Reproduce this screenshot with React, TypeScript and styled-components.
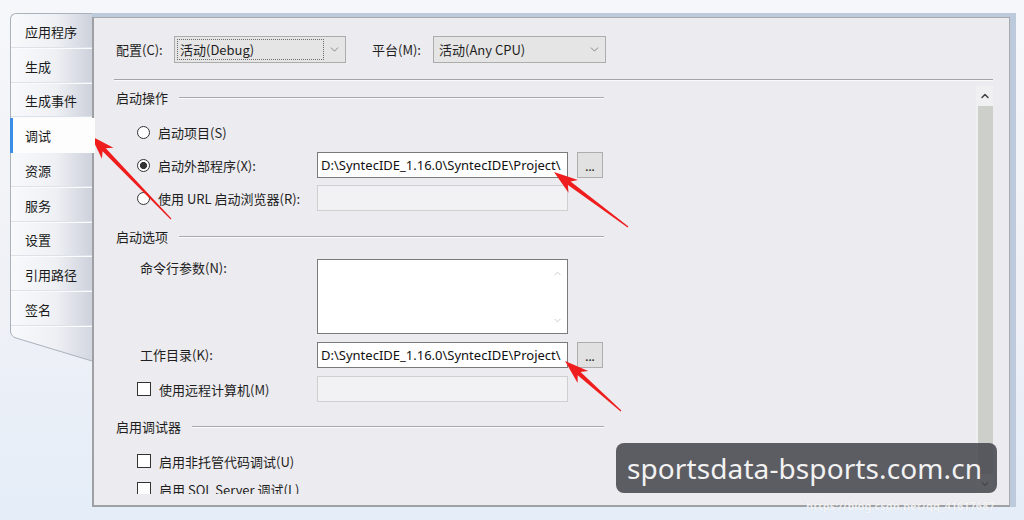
import React from "react";
import styled, { createGlobalStyle } from "styled-components";
import { ChevronDown, ChevronUp } from "lucide-react";

const CJK = `"Noto Sans CJK SC", "Noto Sans", sans-serif`;
const LATIN = `"Noto Sans", "Noto Sans CJK SC", sans-serif`;

const GlobalStyle = createGlobalStyle`
  html, body { margin: 0; padding: 0; }
  body { font-family: ${CJK}; font-size: 13px; color: #1e1e1e; }
  * { box-sizing: border-box; }
`;

const Page = styled.div`
  position: relative;
  width: 1024px;
  height: 520px;
  overflow: hidden;
  display: flex;
  padding: 13px 8px 13px 10px;
  background: linear-gradient(180deg, #f5f7fa 0%, #f0f1f6 55%, #e4edf8 100%);
`;

/* ---------- side tabs ---------- */

const TabColumn = styled.div`
  width: 82px;
  flex-shrink: 0;
  align-self: flex-start;
  display: flex;
  flex-direction: column;
  position: relative;
  z-index: 1;
`;

const Tab = styled.div<{ $active?: boolean }>`
  height: 34.75px;
  display: flex;
  align-items: center;
  font-size: 13px;
  color: #1b1b1b;
  border-left: ${(p) => (p.$active ? "3px solid #3a8ee6" : "1px solid #aab2be")};
  padding-left: ${(p) => (p.$active ? 12 : 14)}px;
  margin-right: ${(p) => (p.$active ? "-3px" : "0")};
  background: ${(p) =>
    p.$active
      ? "#fdfdfe"
      : "linear-gradient(90deg, #f8f9fb 0%, #eef0f4 55%, #cdd1db 100%)"};
  box-shadow: ${(p) =>
    p.$active ? "none" : "inset 0 -1px 0 #fafbfd, inset 0 -2px 0 #dde1e8"};
  &:first-child {
    border-top: 1px solid #aab2be;
    border-top-left-radius: 6px;
    height: 35.75px;
  }
`;

const TabFoot = () => (
  <svg width="82" height="36" viewBox="0 0 82 36">
    <defs>
      <linearGradient id="footFill" x1="0" x2="1" y1="0" y2="0">
        <stop offset="0" stopColor="#f8f9fb" />
        <stop offset="0.55" stopColor="#eef0f4" />
        <stop offset="1" stopColor="#d3d7e0" />
      </linearGradient>
    </defs>
    <path d="M0.5 0 L0.5 4 Q0.5 9 6 11 L82 34 L82 0 Z" fill="url(#footFill)" />
    <path d="M0.5 0 L0.5 4 Q0.5 9 6 11 L82 34" fill="none" stroke="#a9b0bc" />
  </svg>
);

/* ---------- property panel ---------- */

const Frame = styled.div`
  flex: 1;
  display: flex;
  border-top: 4px solid #bccadb;
  border-right: 6px solid #bccadb;
`;

const PanelBody = styled.div`
  flex: 1;
  display: flex;
  flex-direction: column;
  min-height: 0;
  background: #ecebef;
  border: 1px solid #a7a9ad;
  border-left: 2px solid #9ea0a4;
  border-bottom: 2px solid #9ea0a4;
  padding: 18px 16px 11px 20px;
`;

const TopBar = styled.div`
  display: flex;
  align-items: center;
  height: 27px;
`;

const BarLabel = styled.span<{ $w: number; $ml?: number }>`
  width: ${(p) => p.$w}px;
  margin-left: ${(p) => p.$ml ?? 0}px;
  padding-left: 2px;
  flex-shrink: 0;
`;

const Combo = styled.div<{ $w: number }>`
  width: ${(p) => p.$w}px;
  height: 27px;
  display: flex;
  align-items: center;
  background: #e5e5e5;
  border: 1px solid #acacac;
  padding: 2px 4px 2px 2px;
  color: #6a6a6a;
`;

const ComboText = styled.span<{ $focused?: boolean }>`
  flex: 1;
  height: 100%;
  display: flex;
  align-items: center;
  padding-left: 2px;
  margin-right: 4px;
  color: #1e1e1e;
  border: 1px dotted ${(p) => (p.$focused ? "#6d6d6d" : "transparent")};
`;

const Rule = styled.div`
  margin-top: 16px;
  height: 2px;
  border-top: 1px solid #a5a5a8;
  border-bottom: 1px solid #fafafa;
`;

const ScrollArea = styled.div`
  margin-top: 5px;
  flex: 1;
  min-height: 0;
  display: flex;
  overflow: hidden;
`;

const Form = styled.div`
  width: 490px;
  flex-shrink: 0;
  display: flex;
  flex-direction: column;
`;

const SectionHead = styled.div<{ $mt: number }>`
  margin-top: ${(p) => p.$mt}px;
  height: 22px;
  flex-shrink: 0;
  display: flex;
  align-items: center;
  padding-left: 2px;
  &::after {
    content: "";
    flex: 1;
    height: 1px;
    margin-left: 11px;
    background: #a9a9ad;
    box-shadow: 0 1px 0 #fbfbfb;
  }
`;

const FieldRow = styled.div<{ $mt: number; $h: number }>`
  margin-top: ${(p) => p.$mt}px;
  height: ${(p) => p.$h}px;
  flex-shrink: 0;
  display: grid;
  grid-template-columns: 171px 251px 26px;
  column-gap: 9px;
  align-items: center;
  padding-left: 23px;
`;

const Option = styled.span`
  display: flex;
  align-items: center;
  gap: 8px;
  white-space: nowrap;
`;

const Radio = styled.span<{ $checked?: boolean }>`
  width: 13px;
  height: 13px;
  border-radius: 50%;
  border: 1px solid #333;
  background: ${(p) =>
    p.$checked ? "radial-gradient(circle, #333 0 3.3px, #fff 3.8px)" : "#fff"};
`;

const Check = styled.span`
  width: 14px;
  height: 14px;
  border: 1px solid #333;
  background: #fff;
`;

const Caption = styled.span<{ $top?: boolean }>`
  padding-left: 3px;
  white-space: nowrap;
  align-self: ${(p) => (p.$top ? "start" : "center")};
  line-height: 18px;
`;

const TextBox = styled.div<{ $disabled?: boolean }>`
  height: 26px;
  display: flex;
  align-items: center;
  padding: 0 3px;
  overflow: hidden;
  white-space: nowrap;
  font-family: ${LATIN};
  font-size: 13px;
  color: #111;
  background: ${(p) => (p.$disabled ? "#f2f2f4" : "#fff")};
  border: 1px solid ${(p) => (p.$disabled ? "#cfcfd2" : "#7a7a7a")};
`;

const MultiLine = styled.div`
  height: 75px;
  display: flex;
  justify-content: flex-end;
  background: #fff;
  border: 1px solid #7a7a7a;
`;

const ScrollHints = styled.div`
  display: flex;
  flex-direction: column;
  justify-content: space-between;
  padding: 8px 4px 7px 0;
  color: #a9a9a9;
`;

const Browse = styled.div`
  width: 26px;
  height: 26px;
  display: flex;
  align-items: center;
  justify-content: center;
  padding-top: 3px;
  font-family: ${LATIN};
  font-size: 11px;
  font-weight: 700;
  color: #333;
  background: #e1e1e1;
  border: 1px solid #adadad;
`;

const VScroll = styled.div`
  margin-left: auto;
  width: 17px;
  display: flex;
  flex-direction: column;
  background: #f0f0f2;
`;

const ScrollBtn = styled.div`
  height: 20px;
  display: flex;
  align-items: center;
  justify-content: center;
  color: #404040;
`;

const Thumb = styled.div`
  flex: 1;
  margin-left: 2px;
  background: #cdcfca;
`;

/* ---------- overlays ---------- */

const Marks = styled.svg`
  position: absolute;
  left: 0;
  top: 0;
  pointer-events: none;
`;

const Stamp = styled.div`
  position: absolute;
  left: 616px;
  top: 443px;
  width: 381px;
  height: 50px;
  display: flex;
  align-items: center;
  padding: 0 0 1px 11px;
  border-radius: 8px;
  background: rgba(72, 72, 80, 0.88);
  color: #f2f2f2;
  font-family: ${LATIN};
  font-size: 28px;
  letter-spacing: 0.1px;
`;

const BlogMark = styled.div`
  position: absolute;
  left: 806px;
  top: 498px;
  font-family: ${LATIN};
  font-size: 11px;
  font-weight: 700;
  white-space: nowrap;
  color: rgba(255, 255, 255, 0.8);
  text-shadow: 0 0 1px rgba(0, 0, 0, 0.12);
`;

type Pt = [number, number];

function arrowShape(tail: Pt, tip: Pt) {
  const dx = tip[0] - tail[0];
  const dy = tip[1] - tail[1];
  const len = Math.hypot(dx, dy);
  const ux = dx / len;
  const uy = dy / len;
  const nx = -uy;
  const ny = ux;
  const at = (d: number, w: number): string =>
    `${(tip[0] - ux * d + nx * w).toFixed(1)},${(tip[1] - uy * d + ny * w).toFixed(1)}`;
  return [
    at(len, 0.6),
    at(19, 2.2),
    at(24, 8),
    at(0, 0),
    at(24, -8),
    at(19, -2.2),
    at(len, -0.6),
  ].join(" ");
}

const arrows: [Pt, Pt][] = [
  [[171, 219], [91, 136]],
  [[628, 227], [554, 172]],
  [[621, 411], [565, 361]],
];

const tabs = ["应用程序", "生成", "生成事件", "调试", "资源", "服务", "设置", "引用路径", "签名"];

const projectPath = "D:\\SyntecIDE_1.16.0\\SyntecIDE\\Project\\";

export default function App() {
  return (
    <>
      <GlobalStyle />
      <Page>
        <TabColumn>
          {tabs.map((t) => (
            <Tab key={t} $active={t === "调试"}>
              {t}
            </Tab>
          ))}
          <TabFoot />
        </TabColumn>

        <Frame>
          <PanelBody>
            <TopBar>
              <BarLabel $w={60}>配置(C):</BarLabel>
              <Combo $w={172}>
                <ComboText $focused>活动(Debug)</ComboText>
                <ChevronDown size={13} strokeWidth={1.4} />
              </Combo>
              <BarLabel $w={63} $ml={24}>
                平台(M):
              </BarLabel>
              <Combo $w={173}>
                <ComboText>活动(Any CPU)</ComboText>
                <ChevronDown size={13} strokeWidth={1.4} />
              </Combo>
            </TopBar>
            <Rule />

            <ScrollArea>
              <Form>
                <SectionHead $mt={0}>启动操作</SectionHead>
                <FieldRow $mt={11} $h={26}>
                  <Option>
                    <Radio />
                    启动项目(S)
                  </Option>
                </FieldRow>
                <FieldRow $mt={7} $h={26}>
                  <Option>
                    <Radio $checked />
                    启动外部程序(X):
                  </Option>
                  <TextBox>{projectPath}</TextBox>
                  <Browse>...</Browse>
                </FieldRow>
                <FieldRow $mt={7} $h={26}>
                  <Option>
                    <Radio />
                    使用 URL 启动浏览器(R):
                  </Option>
                  <TextBox $disabled />
                </FieldRow>

                <SectionHead $mt={14}>启动选项</SectionHead>
                <FieldRow $mt={12} $h={75}>
                  <Caption $top>命令行参数(N):</Caption>
                  <MultiLine>
                    <ScrollHints>
                      <ChevronUp size={11} strokeWidth={1.3} />
                      <ChevronDown size={11} strokeWidth={1.3} />
                    </ScrollHints>
                  </MultiLine>
                </FieldRow>
                <FieldRow $mt={8} $h={26}>
                  <Caption>工作目录(K):</Caption>
                  <TextBox>{projectPath}</TextBox>
                  <Browse>...</Browse>
                </FieldRow>
                <FieldRow $mt={8} $h={26}>
                  <Option>
                    <Check />
                    使用远程计算机(M)
                  </Option>
                  <TextBox $disabled />
                </FieldRow>

                <SectionHead $mt={13}>启用调试器</SectionHead>
                <FieldRow $mt={12} $h={24}>
                  <Option>
                    <Check />
                    启用非托管代码调试(U)
                  </Option>
                </FieldRow>
                <FieldRow $mt={4} $h={24}>
                  <Option>
                    <Check />
                    启用 SQL Server 调试(L)
                  </Option>
                </FieldRow>
              </Form>

              <VScroll>
                <ScrollBtn>
                  <ChevronUp size={12} strokeWidth={3} />
                </ScrollBtn>
                <Thumb />
                <ScrollBtn>
                  <ChevronDown size={12} strokeWidth={2.4} />
                </ScrollBtn>
              </VScroll>
            </ScrollArea>
          </PanelBody>
        </Frame>

        <Marks width={1024} height={520} viewBox="0 0 1024 520">
          {arrows.map(([tail, tip], i) => (
            <polygon key={i} points={arrowShape(tail, tip)} fill="#ef1d1d" />
          ))}
        </Marks>
        <Stamp>sportsdata-bsports.com.cn</Stamp>
        <BlogMark>https://blog.csdn.net/qq_41617687</BlogMark>
      </Page>
    </>
  );
}
